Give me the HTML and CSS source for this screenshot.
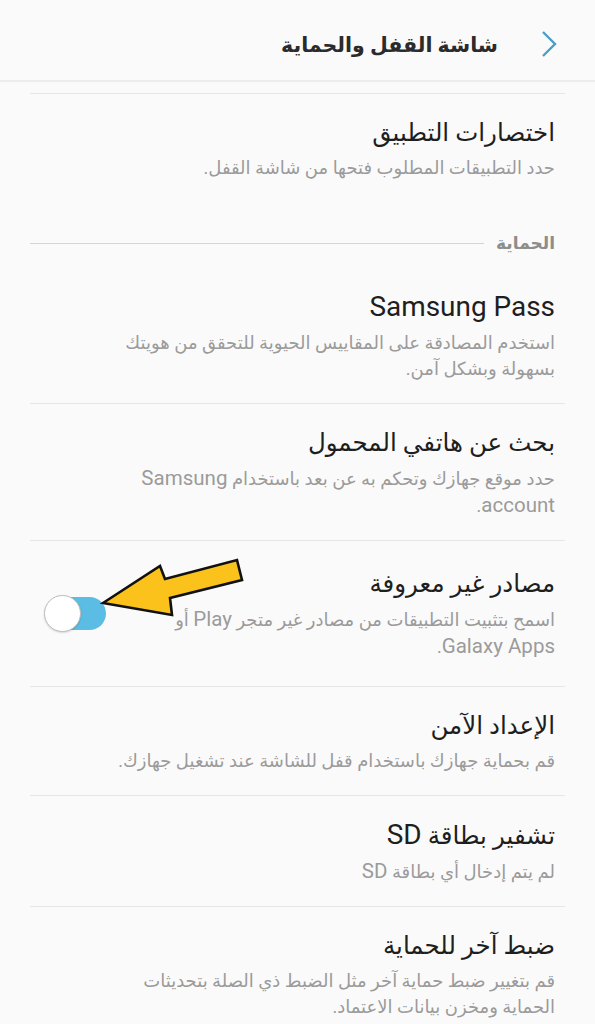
FILE: index.html
```html
<!DOCTYPE html>
<html lang="ar" dir="rtl">
<head>
    <meta charset="UTF-8">
    <title>شاشة القفل والحماية</title>
    <link rel="stylesheet" href="styles.css">
</head>
<body>

<div class="header">
    <svg class="back" width="18" height="28" viewBox="0 0 18 28">
        <polyline points="3,2 15,14 3,26" fill="none" stroke="#4a9fc2" stroke-width="2.4"/>
    </svg>
    <div class="header-title">شاشة القفل والحماية</div>
</div>

<div class="list">
    <div class="item">
        <div class="text">
            <div class="title">اختصارات التطبيق</div>
            <div class="sub">حدد التطبيقات المطلوب فتحها من شاشة القفل.</div>
        </div>
    </div>

    <div class="section">
        <span class="section-name">الحماية</span>
        <span class="section-line"></span>
    </div>

    <div class="item">
        <div class="text">
            <div class="title"><span class="lat">Samsung Pass</span></div>
            <div class="sub">استخدم المصادقة على المقاييس الحيوية للتحقق من هويتك<br>بسهولة وبشكل آمن.</div>
        </div>
    </div>

    <div class="item">
        <div class="text">
            <div class="title">بحث عن هاتفي المحمول</div>
            <div class="sub">حدد موقع جهازك وتحكم به عن بعد باستخدام <span class="lat">Samsung</span><br><span class="lat">account</span>.</div>
        </div>
    </div>

    <div class="item switch-item">
        <div class="text">
            <div class="title">مصادر غير معروفة</div>
            <div class="sub">اسمح بتثبيت التطبيقات من مصادر غير متجر <span class="lat">Play</span> أو<br><span class="lat">Galaxy Apps</span>.</div>
        </div>
        <div class="switch">
            <span class="knob"></span>
        </div>
        <svg class="pointer" width="150" height="64" viewBox="0 0 150 64">
            <polygon points="3,46 60,9 65,22 137,3 142,23 70,41 72,58" fill="#fbc21c" stroke="#111" stroke-width="2.6" stroke-linejoin="miter"/>
        </svg>
    </div>

    <div class="item">
        <div class="text">
            <div class="title">الإعداد الآمن</div>
            <div class="sub">قم بحماية جهازك باستخدام قفل للشاشة عند تشغيل جهازك.</div>
        </div>
    </div>

    <div class="item">
        <div class="text">
            <div class="title">تشفير بطاقة <span class="lat">SD</span></div>
            <div class="sub">لم يتم إدخال أي بطاقة <span class="lat">SD</span></div>
        </div>
    </div>

    <div class="item">
        <div class="text">
            <div class="title">ضبط آخر للحماية</div>
            <div class="sub">قم بتغيير ضبط حماية آخر مثل الضبط ذي الصلة بتحديثات<br>الحماية ومخزن بيانات الاعتماد.</div>
        </div>
    </div>
</div>

</body>
</html>
```

FILE: styles.css
```css
html,body{
    height: 100%;
}
body{
    margin: 0;
    background: #fafafa;
    font-family: Roboto, "DejaVu Sans", sans-serif;
    direction: rtl;
    overflow: hidden;
}

.header{
    height: 82px;
    display: flex;
    align-items: center;
    padding-right: 37px;
    padding-top: 9px;
    box-sizing: border-box;
    border-bottom: 2px solid #ececec;
}

.back{
    margin-top: -2px;
}

.header-title{
    margin-right: 42px;
    font-size: 20.5px;
    font-weight: bold;
    color: #2b2b2b;
}

.list{
    padding-top: 11px;
}

.item{
    margin: 0 30px;
    padding: 21px 10px 21px 60px;
    border-top: 1px solid #e6e6e6;
    display: flex;
    align-items: center;
}

.section + .item{
    border-top: none;
}

.text{
    flex: 1;
}

.title{
    font-size: 24.5px;
    line-height: 36px;
    color: #1e1e1e;
}

.sub{
    margin-top: 4px;
    font-size: 18px;
    line-height: 26px;
    color: #9b9b9b;
    white-space: nowrap;
}

.lat{
    font-size: 1.14em;
}

.section{
    margin: 0 30px;
    padding: 29px 10px 13px 0;
    display: flex;
    align-items: center;
}

.section-name{
    font-size: 17px;
    line-height: 24px;
    font-weight: bold;
    color: #8d8d8d;
}

.section-line{
    flex: 1;
    height: 1px;
    margin-right: 12px;
    background: #d4d4d4;
}

.switch-item{
    position: relative;
    padding-top: 25px;
    padding-bottom: 26px;
    padding-left: 14px;
}

.switch{
    position: relative;
    width: 62px;
    height: 36px;
    margin-right: 4px;
}

.switch::before{
    content: "";
    position: absolute;
    left: 2px;
    right: 0;
    top: 2px;
    height: 33px;
    border-radius: 17px;
    background: #5bbde4;
}

.knob{
    position: absolute;
    left: 0;
    top: 0;
    width: 35px;
    height: 35px;
    border-radius: 50%;
    background: #fff;
    border: 1px solid #bdbdbd;
    box-shadow: 0 1px 2px rgba(0,0,0,0.15);
}

.pointer{
    position: absolute;
    left: 70px;
    top: 16px;
}
```
